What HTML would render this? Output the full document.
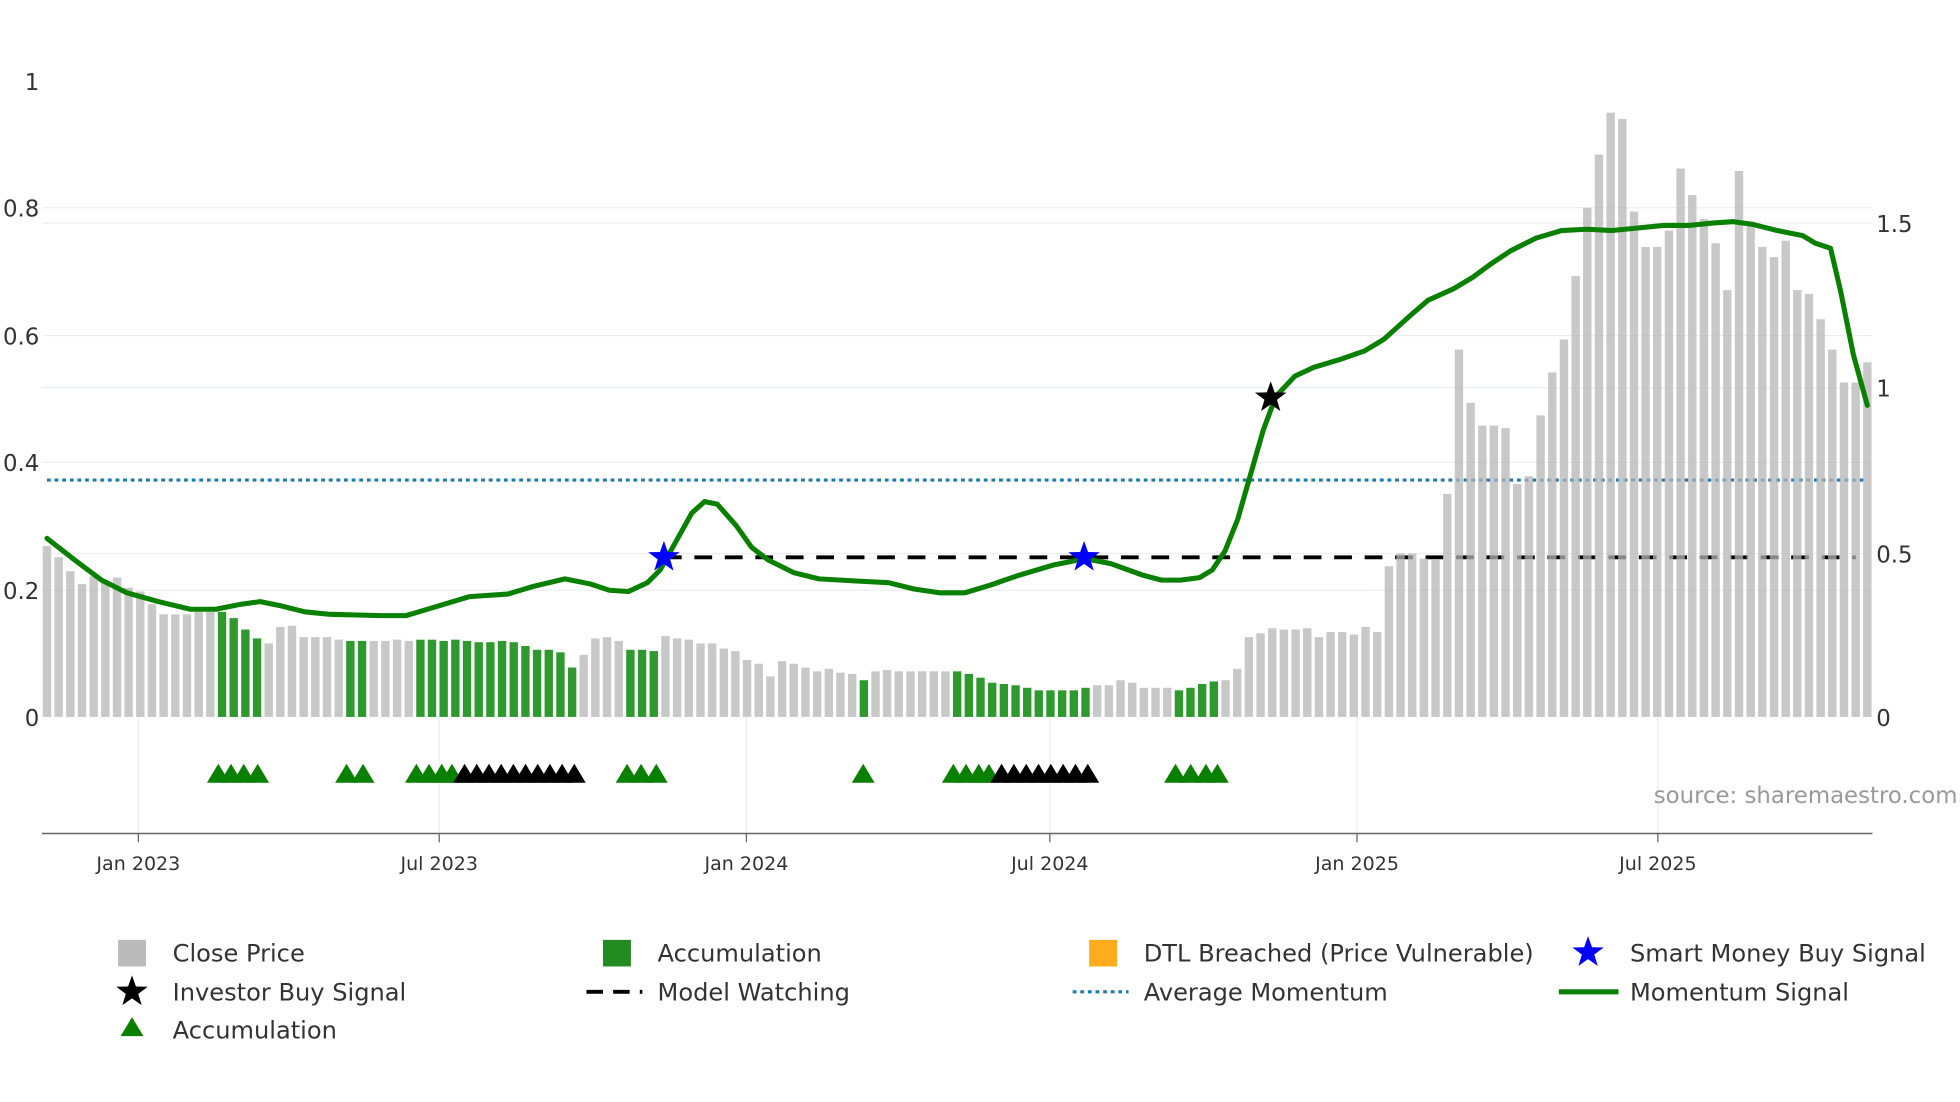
<!DOCTYPE html>
<html><head><meta charset="utf-8"><style>
html,body{margin:0;padding:0;background:#fff;width:1960px;height:1102px;overflow:hidden}
svg{display:block}
text{font-family:"DejaVu Sans","Liberation Sans",sans-serif;fill:#333}
</style></head><body>
<svg id="s" width="1960" height="1102" viewBox="0 0 1544 870" preserveAspectRatio="none" xmlns="http://www.w3.org/2000/svg">
<defs>
<polygon id="star" points="0,-13 3.1,-4.2 12.4,-4 4.9,1.6 7.6,10.5 0,5.2 -7.6,10.5 -4.9,1.6 -12.4,-4 -3.1,-4.2"/>
<polygon id="tri" points="0,-8 9,7 -9,7"/>
</defs>
<g stroke="#eceff2" stroke-width="1">
<line x1="33" x2="1475" y1="164" y2="164"/><line x1="33" x2="1475" y1="265" y2="265"/><line x1="33" x2="1475" y1="365" y2="365"/><line x1="33" x2="1475" y1="466" y2="466"/>
<line x1="33" x2="1475" y1="176" y2="176"/><line x1="33" x2="1475" y1="306" y2="306"/><line x1="33" x2="1475" y1="437" y2="437"/>
<line x1="109" x2="109" y1="566" y2="658"/><line x1="346" x2="346" y1="566" y2="658"/><line x1="588" x2="588" y1="566" y2="658"/><line x1="827" x2="827" y1="566" y2="658"/><line x1="1069" x2="1069" y1="566" y2="658"/><line x1="1306" x2="1306" y1="566" y2="658"/>
</g>
<line x1="37" x2="1471" y1="379" y2="379" stroke="#1f77b4" stroke-width="2.5" stroke-dasharray="3 3"/>
<line x1="523" x2="1462" y1="440" y2="440" stroke="#000" stroke-width="3" stroke-dasharray="14 10"/>
<g id="bars"></g>
<polyline id="mom" fill="none" stroke="#0a8000" stroke-width="4" stroke-linejoin="round" stroke-linecap="round"/>
<use href="#star" x="523" y="440" fill="#0000ff"/>
<use href="#star" x="854" y="440" fill="#0000ff"/>
<use href="#star" x="1001" y="314" fill="#000"/>
<g id="tris"></g>
<line x1="33" x2="1475" y1="658" y2="658" stroke="#666" stroke-width="1.2"/>
<g stroke="#666"><line x1="109" x2="109" y1="658" y2="665"/><line x1="346" x2="346" y1="658" y2="665"/><line x1="588" x2="588" y1="658" y2="665"/><line x1="827" x2="827" y1="658" y2="665"/><line x1="1069" x2="1069" y1="658" y2="665"/><line x1="1306" x2="1306" y1="658" y2="665"/></g>
<g font-size="18" text-anchor="end">
<text x="31" y="71">1</text><text x="31" y="171">0.8</text><text x="31" y="272">0.6</text><text x="31" y="372">0.4</text><text x="31" y="473">0.2</text><text x="31" y="573">0</text>
</g>
<g font-size="18">
<text x="1478" y="183">1.5</text><text x="1478" y="313">1</text><text x="1478" y="444">0.5</text><text x="1478" y="573">0</text>
</g>
<g font-size="15" text-anchor="middle">
<text x="109" y="687">Jan 2023</text><text x="346" y="687">Jul 2023</text><text x="588" y="687">Jan 2024</text><text x="827" y="687">Jul 2024</text><text x="1069" y="687">Jan 2025</text><text x="1306" y="687">Jul 2025</text>
</g>
<text x="1542" y="634" font-size="18" text-anchor="end" style="fill:#999">source: sharemaestro.com</text>
<g font-size="19">
<rect x="93" y="742" width="22" height="21" fill="#bbb"/><text x="136" y="759">Close Price</text>
<rect x="475" y="742" width="22" height="21" fill="#228b22"/><text x="518" y="759">Accumulation</text>
<rect x="858" y="742" width="22" height="21" fill="#ffac1c"/><text x="901" y="759">DTL Breached (Price Vulnerable)</text>
<use href="#star" x="1251" y="752" fill="#0000ff"/><text x="1284" y="759">Smart Money Buy Signal</text>
<use href="#star" x="104" y="783" fill="#000"/><text x="136" y="790">Investor Buy Signal</text>
<line x1="462" x2="506" y1="783" y2="783" stroke="#000" stroke-width="3" stroke-dasharray="13 8"/><text x="518" y="790">Model Watching</text>
<line x1="845" x2="889" y1="783" y2="783" stroke="#1f77b4" stroke-width="2.5" stroke-dasharray="3 3"/><text x="901" y="790">Average Momentum</text>
<line x1="1228" x2="1275" y1="783" y2="783" stroke="#0a8000" stroke-width="4"/><text x="1284" y="790">Momentum Signal</text>
<use href="#tri" x="104" y="811" fill="#0a8000"/><text x="136" y="820">Accumulation</text>
</g>
</svg>
<script>
var b="431 440 451 461 455 460 456 464 467 477 485 485 485 483 483 483g 488g 497g 504g 508 495 494 503 503 503 505 506g 506g 506 506 505 506 505g 505g 506g 505g 506g 507g 507g 506g 507g 510g 513g 513g 515g 527g 517 504 503 506 513g 513g 514g 502 504 505 508 508 512 514 521 524 534 522 524 527 530 528 531 532 537g 530 529 530 530 530 530 530 530g 532g 535g 539g 540g 541g 543g 545g 545g 545g 545g 543g 541 541 537 539 543 543 543 545g 543g 540g 538g 537 528 503 500 496 497 497 496 503 499 499 501 495 499 447 437 437 441 442 390 276 318 336 336 338 382 376 328 294 268 218 164 122 89 94 167 195 195 182 133 154 173 192 229 135 175 195 203 190 229 232 252 276 302 302 286".split(" ");
var g=document.getElementById("bars"),h="";
var step=(1471-37)/(b.length-1);
b.forEach(function(v,i){var gr=v.indexOf("g")>=0;var t=parseFloat(v);var x=37+i*step;
h+='<rect x="'+(x-3.3).toFixed(1)+'" y="'+t+'" width="6.6" height="'+(566-t)+'" fill="'+(gr?"#2e9a2e":"#b6b6b6")+'"'+(gr?'':' fill-opacity="0.75"')+'/>';});
g.innerHTML=h;
var m="37,425 60,443 80,458 100,468 125,475 150,481 170,481 190,477 205,475 220,478 240,483 260,485 300,486 320,486 340,480 370,471 400,469 420,463 445,457 465,461 480,466 495,467 510,460 520,450 530,432 545,405 555,396 565,398 580,415 592,432 605,442 625,452 645,457 680,459 700,460 720,465 740,468 760,468 780,462 800,455 830,446 855,441 875,445 900,454 915,458 930,458 945,456 955,450 965,435 975,410 985,375 995,340 1005,313 1020,297 1035,290 1055,284 1075,277 1090,268 1110,250 1125,237 1145,228 1160,219 1175,208 1190,198 1210,188 1230,182 1250,181 1270,182 1290,180 1310,178 1330,178 1350,176 1365,175 1380,177 1400,182 1420,186 1430,192 1442,196 1450,230 1460,280 1471,320";
document.getElementById("mom").setAttribute("points",m);
var tg=[172,182,192,203,273,286,328,338,348,356,494,505,517,680,751,761,771,779,926,938,950,959],tb=[];
for(var i=0;i<10;i++)tb.push(366+i*9.6);
for(var i=0;i<8;i++)tb.push(789+i*9.7);
var s="";tg.forEach(function(x){s+='<use href="#tri" x="'+x+'" y="611" fill="#0a8000"/>';});
tb.forEach(function(x){s+='<use href="#tri" x="'+x.toFixed(1)+'" y="611" fill="#000"/>';});
document.getElementById("tris").innerHTML=s;
</script>
</body></html>
